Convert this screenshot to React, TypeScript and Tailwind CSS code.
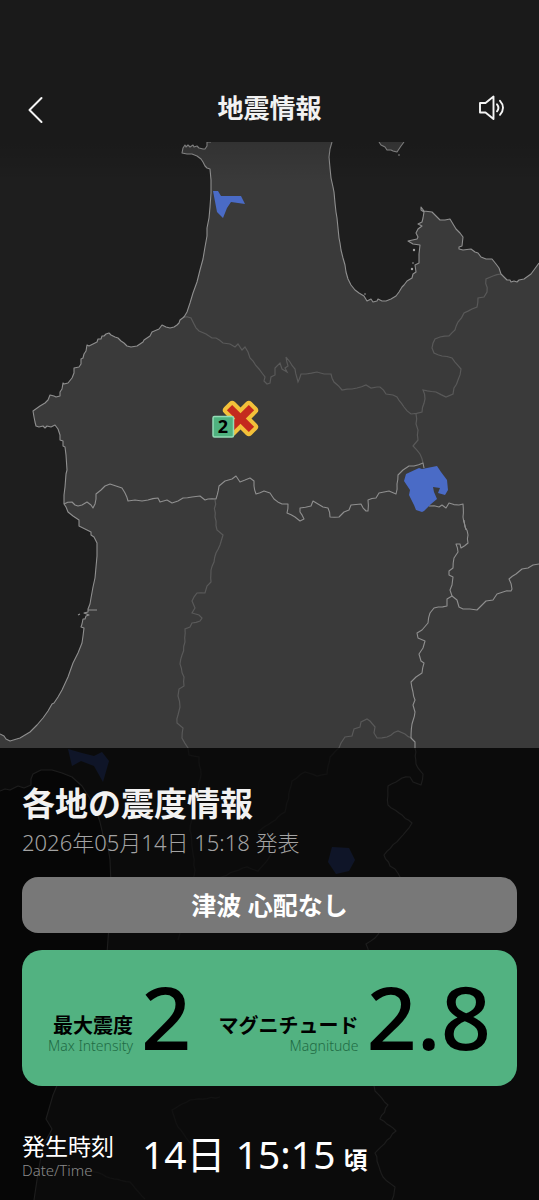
import React from "react";

type Point = [number, number];

const parse = (s: string): Point[] =>
  s.split(" ").map((p) => p.split(",").map(Number) as Point);

/** Adds a small repeatable wobble between survey points so borders look natural. */
const rough = (s: string, amp: number): string => {
  const pts = parse(s);
  let seed = 7;
  const rnd = () => {
    seed = (seed * 16807) % 2147483647;
    return seed / 2147483647 - 0.5;
  };
  const out: Point[] = [];
  pts.forEach(([x, y], i) => {
    out.push([x, y]);
    const next = pts[i + 1];
    if (!next) return;
    const [dx, dy] = [next[0] - x, next[1] - y];
    const len = Math.hypot(dx, dy);
    const steps = Math.min(8, Math.floor(len / 4));
    for (let k = 1; k < steps; k++) {
      const t = k / steps;
      const d = rnd() * amp * 2;
      out.push([x + dx * t - (dy / len) * d, y + dy * t + (dx / len) * d]);
    }
  });
  return out.map(([x, y]) => `${x.toFixed(1)},${y.toFixed(1)}`).join(" ");
};

const westSea =
  "211,142 207,142 207,146 205,149 203,149 199,148 197,146 194,147 193,145 190,147 188,145 186,147 185,145 183,148 182,153 187,154 192,154 197,156 201,159 203,162 205,166 207,168 210,169 211,180 211,193 210,207 209,218 208,223 207,228 207,236 205,247 203,259 200,270 197,282 193,293 190,303 187,312 184,317 180,320 179,323 177,325 174,327 170,328 166,327 162,325 159,329 152,332 150,336 144,340 143,342 137,346 131,347 127,346 124,343 121,341 118,338 115,337 111,335 109,333 106,334 104,336 102,336 101,339 98,339 97,342 93,344 89,346 87,345 86,351 84,354 83,358 81,359 81,364 79,367 74,368 74,373 72,378 68,383 64,384 63,383 62,389 60,392 60,396 56,397 54,396 50,395 48,400 45,403 40,406 33,411 34,417 35,422 36,426 39,427 43,426 45,428 47,426 51,427 55,425 58,429 60,435 60,440 63,441 63,446 65,447 66,455 67,470 66,474 65,487 64,495 64,504 66,507 68,512 73,516 79,520 79,526 87,530 91,532 91,535 94,537 97,543 97,556 96,567 95,578 93,587 91,598 90,604 88,609 88,612 84,613 89,615 86,616 85,619 83,619 82,624 81,627 84,628 83,636 82,643 78,653 73,663 68,677 62,690 58,697 54,703 52,704 48,711 43,718 37,725 30,732 20,738 10,741 6,739 4,736 0,734";

const baySea =
  "332,142 330,149 329,157 330,168 331,178 333,187 334,192 335,203 336,212 337,218 338,228 339,238 340,243 341,250 343,258 345,265 346,272 348,279 351,285 355,290 359,293 364,296 367,301 371,299 373,302 377,301 378,299 382,301 386,301 391,299 396,296 399,292 402,287 404,285 407,281 412,278 413,274 416,272 415,265 419,263 419,254 420,245 413,244 408,241 417,239 418,237 416,233 418,229 422,226 418,224 422,222 423,218 424,212 421,210 421,207 424,211 432,212 436,216 440,220 445,220 450,219 453,224 456,229 460,233 463,237 462,246 459,247 459,249 463,250 471,249 475,252 478,253 481,257 486,259 492,259 496,264 499,268 501,274 507,280 510,280 511,282 514,281 517,282 519,280 524,279 531,274 539,263";

const southSea =
  "0,791 5,789 10,790 18,786 24,788 31,785 31,779 33,774 41,770 52,770 62,773 72,777 82,786 89,797 96,810 100,822 103,835 108,847 110,860 111,885 110,912 107,953 92,1000 72,1050 53,1095 46,1119 52,1129 43,1146 38,1173 34,1200";

const majorBorders = [
  "64,504 72,502 75,505 78,506 82,505 87,502 91,505 93,508 96,499 96,494 101,490 105,486 110,484 116,486 122,488 125,493 128,501 135,500 142,501 148,500 158,498 160,502 167,500 172,503 178,501 183,498 192,497 200,496 205,500 208,499 216,499 219,486 225,481 232,479 236,476 240,482 250,478 254,481 254,486 256,494 264,491 270,493 274,499 282,504 288,504 287,513 295,517 300,521 304,519 300,512 300,508 311,506 313,501 318,504 323,507 328,508 330,517 339,517 344,512 349,510 351,505 361,504 366,511 368,511 368,500 376,498 379,493 389,491 396,494 397,484 398,475 403,470 409,466 414,466 423,463 424,468",
  "429,506 439,507 442,505 446,508 449,503 459,505 463,504 463,517 466,530",
  "464,520 465,527 468,535 468,543 461,548 460,544 456,544 458,552 454,558 453,568 449,571 449,575 453,577 452,585 450,590 452,596 447,599 447,606 434,608 430,613 428,623 422,630 417,633 418,638 425,641 423,648 419,654 421,661 424,663 422,673 416,677 411,682 413,692 415,700 413,705 415,712 412,724 411,738 415,742 415,748 416,764 423,774 421,785 413,782 410,777 402,778 396,782 388,786 388,805 399,813 412,823 403,835 384,855 390,866 395,869 401,879 398,905 375,938 366,944 369,953 362,1010 368,1060 375,1091 388,1105 380,1119 396,1131 375,1153 383,1177 395,1187 392,1200",
  "452,596 457,600 459,607 463,609 470,609 477,610 481,606 486,601 493,600 497,594 503,592 511,591 512,589 509,579 516,574 522,569 528,568 533,565 539,564",
];

const minorBorders = [
  "183,317 191,318 194,324 199,331 206,334 212,338 216,338 223,343 230,344 235,347 238,344 242,350 245,347 248,352 250,358 259,369 265,377 264,381 267,384 270,383 271,377 275,375 275,368 280,363 282,369 287,372 285,368 288,366 286,357 290,362 295,369 298,382 301,374 306,374 317,372 324,374 331,374 334,382 342,390 357,388 366,385 371,388 377,387 380,387 386,394 393,395 397,397 404,407 411,414 422,412 425,399 423,390 436,392 446,397 453,394 454,388 458,380 461,369 452,358 442,356 434,353 432,348 435,339 440,337 449,336 455,330 458,322 464,313 472,309 477,307 478,298 484,297 487,292 486,279 493,276 501,274",
  "416,414 416,424 418,430 418,440 413,446 420,454 423,463",
  "215,500 215,517 217,530 223,535 220,545 216,553 214,562 211,570 211,582 207,586 205,593 197,593 192,601 195,608 192,613 199,615 202,618 200,621 192,623 190,627 185,629 185,642 182,655 180,664 184,677 184,686 179,689 178,696 180,707 178,715 177,723 183,728 182,738 188,748 189,755 199,757 201,774 196,800 190,830 195,870 178,940",
  "412,738 405,734 398,731 387,737 377,738 374,733 375,727 370,721 367,719 361,722 360,727 354,729 352,736 345,737 341,743 339,748 330,757 327,774 317,776 305,772 292,781 285,812 272,822 258,832 276,849 258,871 247,867 218,878 196,895 190,920",
  "220,1097 190,1100 172,1110 178,1127 192,1145",
  "86,1168 110,1178 130,1182 145,1199",
];

const lakes = [
  "213,191 218,191 221,196 241,196 245,204 231,202 227,208 223,218 217,212",
  "406,474 419,468 422,469 437,466 441,472 447,480 448,490 445,495 438,493 440,488 433,487 434,492 437,499 431,504 424,511 422,512 416,510 414,505 409,495 410,490 404,481",
  "68,749 82,753 94,756 102,752 109,761 103,782 94,766 81,761 72,766",
  "332,847 349,848 355,860 349,871 336,874 328,862",
];

function EarthquakeMap() {
  return (
    <svg
      className="absolute inset-0 h-full w-full"
      viewBox="0 0 539 1200"
      preserveAspectRatio="xMidYMid slice"
      role="img"
      aria-label="震源地図"
    >
      <defs>
        <linearGradient id="shade" x1="0" y1="0" x2="0" y2="1">
          <stop offset="0" stopColor="#000" stopOpacity="0.14" />
          <stop offset="1" stopColor="#000" stopOpacity="0" />
        </linearGradient>
      </defs>
      <rect width="539" height="1200" fill="#3a3a3a" />
      <g fill="#1e1e1e">
        <polygon points={"0,142 " + westSea} />
        <polygon points={baySea + " 539,142"} />
        <polygon points={southSea + " 0,1200"} />
      </g>
      <g fill="none" stroke="#595959" strokeWidth="1.2">
        {minorBorders.map((b) => (
          <polyline key={b} points={rough(b, 0.7)} />
        ))}
      </g>
      <g fill="none" stroke="#8f8f8f" strokeWidth="1.1" strokeLinejoin="round">
        {majorBorders.map((b) => (
          <polyline key={b} points={rough(b, 0.7)} />
        ))}
        <polyline points={westSea} />
        <polyline points={baySea} />
        <polyline points={southSea} />
        <path d="M88 610h9M78 615l2-1" />
        <path
          d="M379 142l2 3 4 2 2 3h4l2 1 4 1 2-3 2-3 3-4"
          fill="#3a3a3a"
        />
      </g>
      <g fill="#a3a3a3">
        <circle cx="399" cy="155" r="0.8" />
        <circle cx="414" cy="250" r="1.2" />
        <circle cx="413" cy="263" r="0.8" />
        <circle cx="412" cy="269" r="1.2" />
        <circle cx="365" cy="294" r="0.8" />
      </g>
      <g fill="#4a6bc6">
        {lakes.map((l) => (
          <polygon key={l} points={l} />
        ))}
      </g>
      <rect y="142" width="539" height="40" fill="url(#shade)" />
      <g transform="translate(240.500 418.500) rotate(45)">
        <g fill="#f3c13a" stroke="#f3c13a" strokeWidth="8" strokeLinejoin="round">
          <rect x="-15.500" y="-3.750" width="31" height="7.500" />
          <rect x="-3.750" y="-15.500" width="7.500" height="31" />
        </g>
        <g fill="#c42a1e">
          <rect x="-15.500" y="-3.750" width="31" height="7.500" />
          <rect x="-3.750" y="-15.500" width="7.500" height="31" />
        </g>
      </g>
      <rect
        x="213"
        y="416.500"
        width="20.500"
        height="20.500"
        rx="1.500"
        fill="#4fb27f"
        stroke="#93dcb6"
        strokeWidth="1.500"
      />
      <text
        x="223"
        y="433"
        textAnchor="middle"
        fontFamily="Noto Sans, sans-serif"
        fontWeight="700"
        fontSize="18"
        fill="#000"
      >
        2
      </text>
    </svg>
  );
}

function Reading({
  label,
  sub,
  value,
}: {
  label: string;
  sub: string;
  value: string;
}) {
  return (
    <div className="flex items-end gap-2">
      <div className="flex flex-col items-end pb-1 whitespace-nowrap">
        <span className="text-[20px] leading-6 font-bold">{label}</span>
        <span className="text-[14px] leading-4 font-light text-[#1f6b44]">
          {sub}
        </span>
      </div>
      <span className="text-[88px] leading-[84px] font-medium">{value}</span>
    </div>
  );
}

export default function App() {
  return (
    <div className="relative isolate flex min-h-screen flex-col bg-[#1e1e1e] font-['Noto_Sans','Noto_Sans_CJK_JP',sans-serif] text-white">
      <div className="absolute inset-0 -z-10 overflow-hidden">
        <EarthquakeMap />
      </div>

      <header className="grid grid-cols-[1fr_auto_1fr] items-center bg-[#1a1a1a] px-5 pt-20 pb-1.5">
        <button
          type="button"
          aria-label="戻る"
          className="flex size-10 items-center justify-self-start"
        >
          <svg width="32" height="32" viewBox="0 0 32 32" fill="none">
            <path
              d="M21.500 6L9.500 18l12 12"
              stroke="#f4f4f4"
              strokeWidth="2"
              strokeLinecap="round"
              strokeLinejoin="round"
            />
          </svg>
        </button>
        <h1 className="text-[26px] leading-10 font-bold text-[#f2f2f2]">
          地震情報
        </h1>
        <button
          type="button"
          aria-label="音声"
          className="flex size-14 items-center justify-center justify-self-end"
        >
          <svg
            width="32"
            height="32"
            viewBox="0 0 32 32"
            fill="none"
            stroke="#f4f4f4"
            strokeWidth="1.900"
            strokeLinejoin="round"
            strokeLinecap="round"
          >
            <path d="M5 11h5.500l8-6.500v22.500l-8-6.500H5z" />
            <path d="M22 12.300c1.800 2.200 1.800 4.800 0 7M25 8.800c4 4.200 4 9.800 0 14" />
          </svg>
        </button>
      </header>

      <div className="min-h-80 flex-1" />

      <main className="bg-black/80 px-[22px] pt-9 pb-[22px]">
        <h2 className="text-[33px] leading-10 font-bold text-[#f2f2f2]">
          各地の震度情報
        </h2>
        <p className="mt-0.5 text-[22px] leading-8 font-light text-[#a3a3a3]">
          2026年05月14日 15:18 発表
        </p>

        <p className="mt-[19px] rounded-2xl bg-[#787878] text-center text-[25px] leading-[56px] font-bold">
          津波 心配なし
        </p>

        <section className="mt-[17px] flex items-center justify-between rounded-[20px] bg-[#52b281] px-[26px] pt-6 pb-7 text-black">
          <Reading label="最大震度" sub="Max Intensity" value="2" />
          <Reading label="マグニチュード" sub="Magnitude" value="2.8" />
        </section>

        <section className="mt-11 flex items-center gap-7">
          <div className="flex flex-col">
            <span className="text-[23px] leading-8">発生時刻</span>
            <span className="text-[15px] leading-4 font-light text-[#8a8a8a]">
              Date/Time
            </span>
          </div>
          <p className="flex items-baseline gap-2">
            <span className="text-[39px] leading-12">14日 15:15</span>
            <span className="text-[24px] font-bold">頃</span>
          </p>
        </section>
      </main>
    </div>
  );
}
